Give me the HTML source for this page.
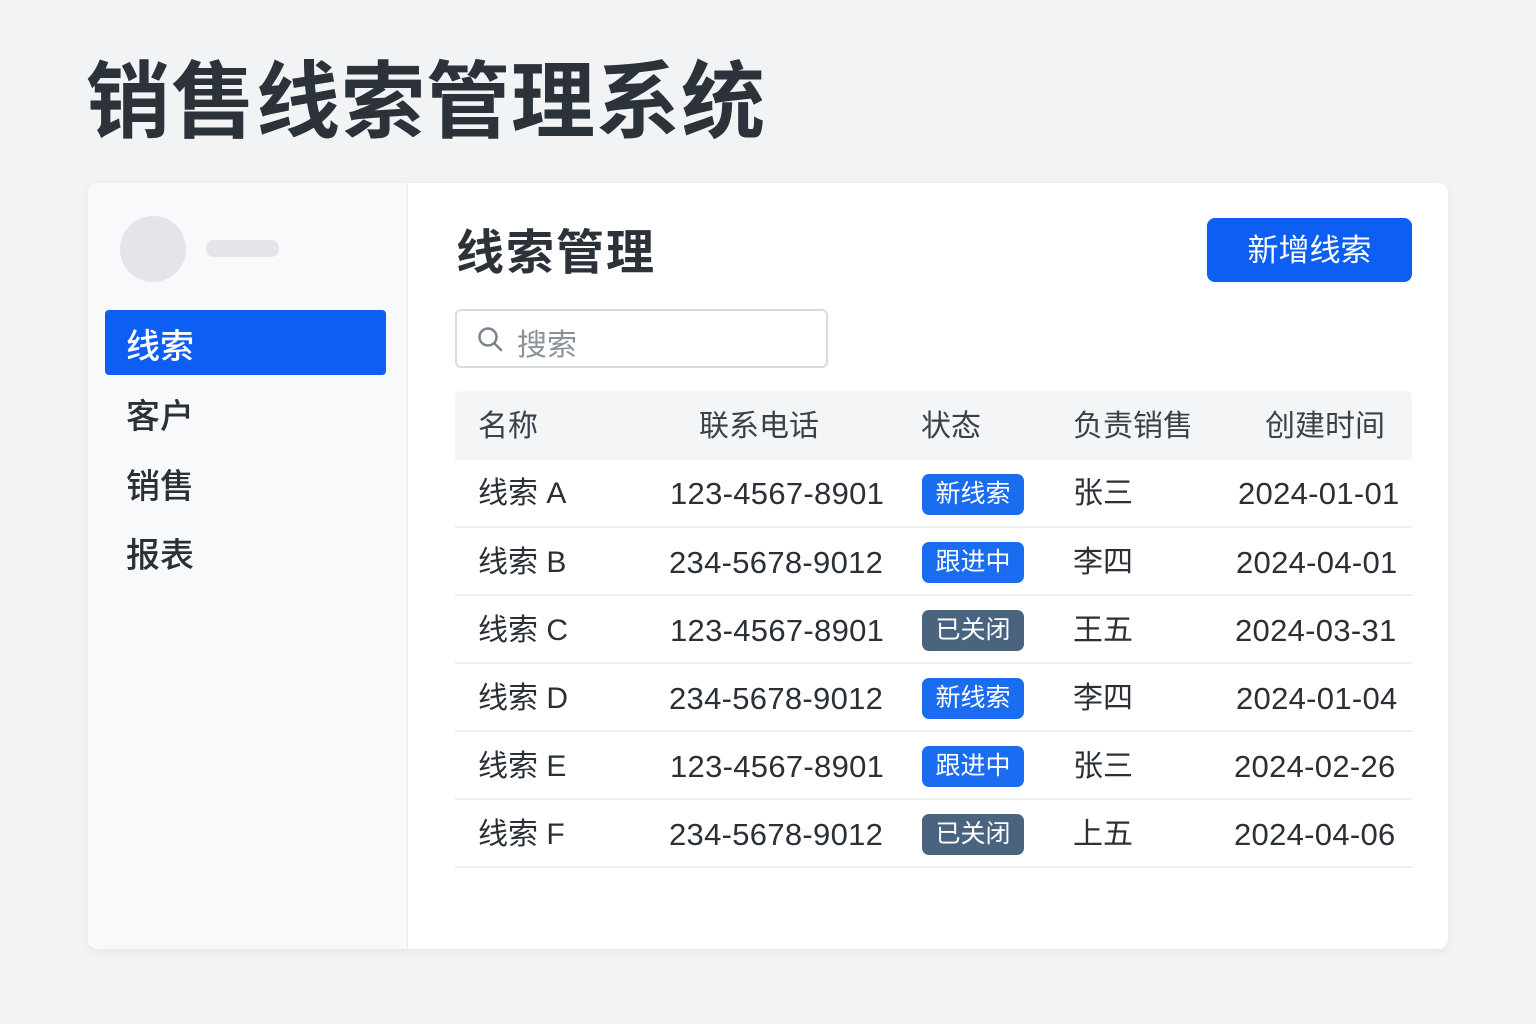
<!DOCTYPE html>
<html><head><meta charset="utf-8"><style>
*{margin:0;padding:0;box-sizing:border-box}
body{width:1536px;height:1024px;background:#f1f3f5;font-family:"Liberation Sans","Noto Sans CJK SC",sans-serif;position:relative;overflow:hidden;color:#2a3036}
.abs{position:absolute}
h1{position:absolute;left:86px;top:52px;font-size:84px;font-weight:700;color:#2b3239;letter-spacing:1px;line-height:100px}
.card{left:88px;top:183px;width:1360px;height:766px;background:#fff;border-radius:10px;box-shadow:0 2px 10px rgba(0,0,0,.06);overflow:hidden}
.side{left:0;top:0;width:320px;height:766px;background:#f8f9fa;border-right:1px solid #e8ebee}
.nav{position:absolute;left:38px;font-size:34px;color:#2a3036;font-weight:500}
.th,.td{position:absolute;font-size:30px;line-height:40px}
.td.n{font-size:31px;letter-spacing:.3px}
.th{color:#3a4249}
.badge{position:absolute;left:834px;width:102px;height:41px;border-radius:7px;color:#fff;font-size:25px;line-height:41px;text-align:center}
.b{background:#1a6cf0}.g{background:#4a6480}
.row{position:absolute;left:367px;width:957px;height:68px;border-bottom:2px solid #eef0f2}
</style></head><body>
<h1>销售线索管理系统</h1>
<div class="abs card">
 <div class="abs side">
  <div class="abs" style="left:32px;top:33px;width:66px;height:66px;border-radius:50%;background:#e3e5e8"></div>
  <div class="abs" style="left:118px;top:57px;width:73px;height:17px;border-radius:8px;background:#e3e5e8"></div>
  <div class="abs" style="left:17px;top:127px;width:281px;height:65px;border-radius:4px;background:#0c5ff2"></div>
  <div class="nav" style="top:136px;color:#fff">线索</div>
  <div class="nav" style="top:206px">客户</div>
  <div class="nav" style="top:276px">销售</div>
  <div class="nav" style="top:345px">报表</div>
 </div>
 <div class="abs" style="left:368px;top:30px;font-size:48px;font-weight:700;color:#2b3239;letter-spacing:2px">线索管理</div>
 <div class="abs" style="left:1119px;top:35px;width:205px;height:64px;border-radius:8px;background:#0c5ff2;color:#fff;font-size:31px;line-height:66px;text-align:center">新增线索</div>
 <div class="abs" style="left:367px;top:126px;width:373px;height:59px;border:2px solid #d8dce0;border-radius:6px">
  <svg class="abs" style="left:20px;top:15px" width="28" height="28" viewBox="0 0 28 28"><circle cx="11" cy="11" r="8.5" fill="none" stroke="#7a838c" stroke-width="2.5"/><path d="M17.5 17.5L24 24" stroke="#7a838c" stroke-width="2.5" stroke-linecap="round"/></svg>
  <div class="abs" style="left:60px;top:9px;font-size:30px;color:#8a9299">搜索</div>
 </div>
 <div class="abs" style="left:367px;top:208px;width:957px;height:69px;background:#f3f5f7;border-radius:6px 6px 0 0"></div>
 <div class="th" style="left:390px;top:224px">名称</div>
 <div class="th" style="left:611px;top:224px">联系电话</div>
 <div class="th" style="left:833px;top:224px">状态</div>
 <div class="th" style="left:985px;top:224px">负责销售</div>
 <div class="th" style="left:1177px;top:224px">创建时间</div>

 <div class="row" style="top:277px"></div>
 <div class="row" style="top:345px"></div>
 <div class="row" style="top:413px"></div>
 <div class="row" style="top:481px"></div>
 <div class="row" style="top:549px"></div>
 <div class="row" style="top:617px"></div>

 <div class="td" style="left:390px;top:291px">线索 A</div><div class="td n" style="left:582px;top:291px">123-4567-8901</div><div class="badge b" style="top:291px">新线索</div><div class="td" style="left:985px;top:291px">张三</div><div class="td n" style="left:1150px;top:291px">2024-01-01</div>
 <div class="td" style="left:390px;top:360px">线索 B</div><div class="td n" style="left:581px;top:360px">234-5678-9012</div><div class="badge b" style="top:359px">跟进中</div><div class="td" style="left:985px;top:360px">李四</div><div class="td n" style="left:1148px;top:360px">2024-04-01</div>
 <div class="td" style="left:390px;top:428px">线索 C</div><div class="td n" style="left:582px;top:428px">123-4567-8901</div><div class="badge g" style="top:427px">已关闭</div><div class="td" style="left:985px;top:428px">王五</div><div class="td n" style="left:1147px;top:428px">2024-03-31</div>
 <div class="td" style="left:390px;top:496px">线索 D</div><div class="td n" style="left:581px;top:496px">234-5678-9012</div><div class="badge b" style="top:495px">新线索</div><div class="td" style="left:985px;top:496px">李四</div><div class="td n" style="left:1148px;top:496px">2024-01-04</div>
 <div class="td" style="left:390px;top:564px">线索 E</div><div class="td n" style="left:582px;top:564px">123-4567-8901</div><div class="badge b" style="top:563px">跟进中</div><div class="td" style="left:985px;top:564px">张三</div><div class="td n" style="left:1146px;top:564px">2024-02-26</div>
 <div class="td" style="left:390px;top:632px">线索 F</div><div class="td n" style="left:581px;top:632px">234-5678-9012</div><div class="badge g" style="top:631px">已关闭</div><div class="td" style="left:985px;top:632px">上五</div><div class="td n" style="left:1146px;top:632px">2024-04-06</div>
</div>
</body></html>
